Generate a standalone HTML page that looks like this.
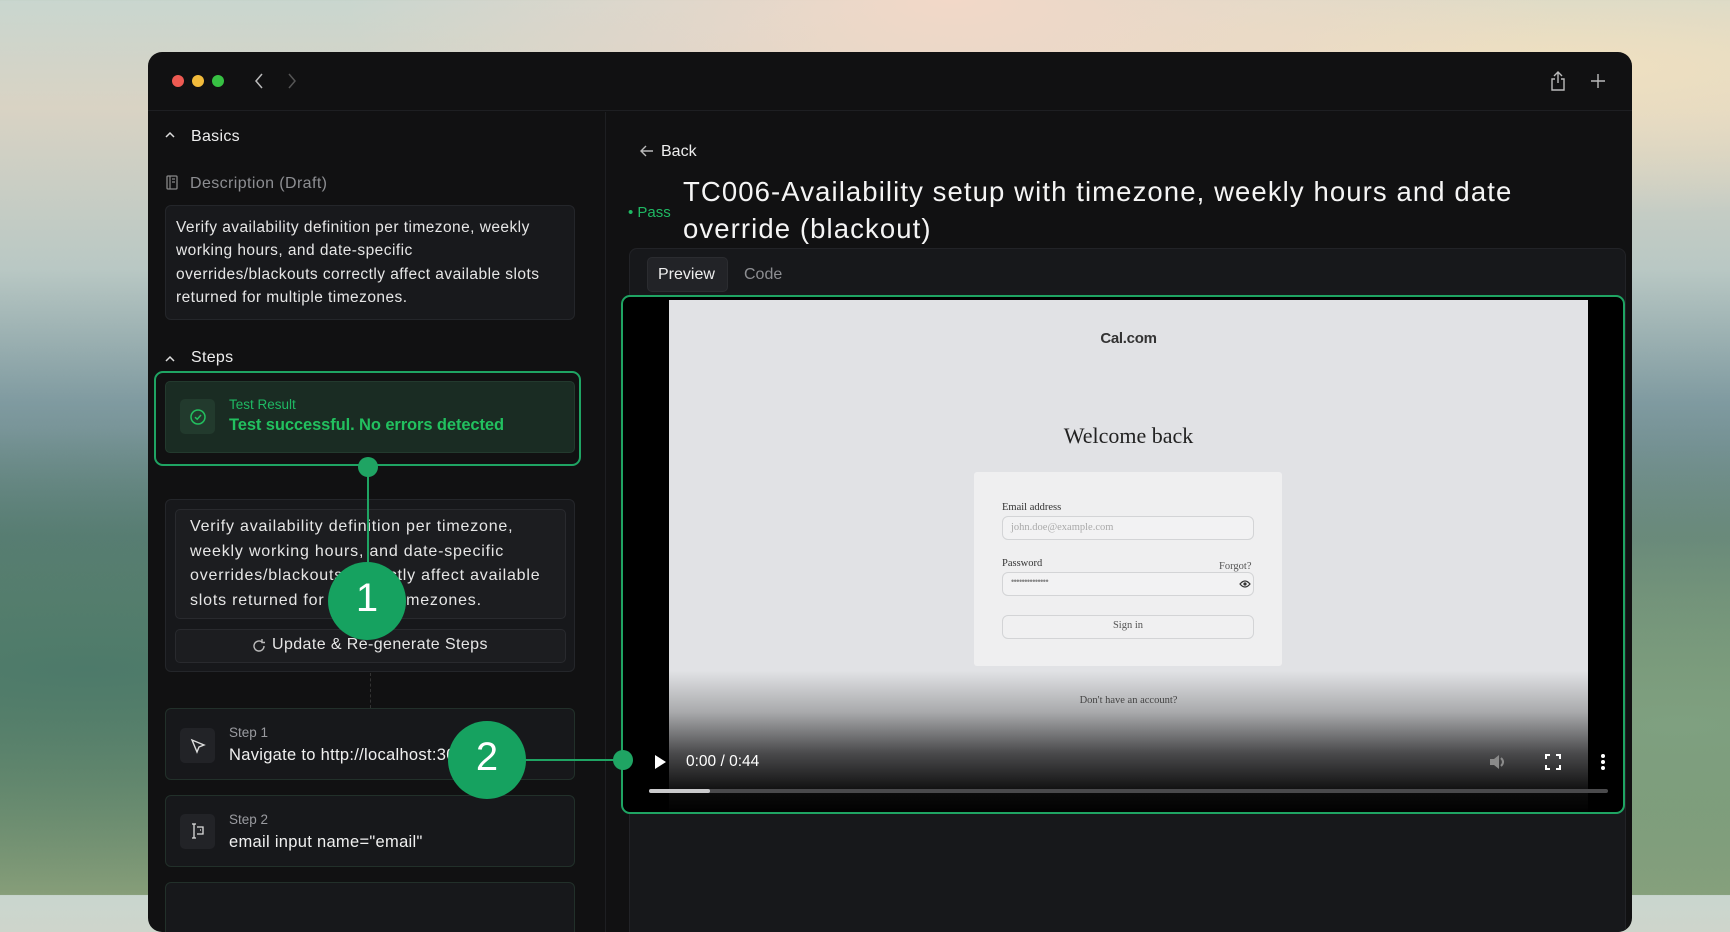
<!DOCTYPE html>
<html><head><meta charset="utf-8"><style>
*{box-sizing:border-box;margin:0;padding:0}
body{width:1730px;height:895px;overflow:hidden;position:relative;font-family:"Liberation Sans",sans-serif;
background:linear-gradient(180deg,#c9d6cf 0%,#d9d3c4 12%,#b9c8c4 30%,#7f9aa0 45%,#5f7f78 60%,#6f8e6c 80%,#8aa07a 100%);}
.abs{position:absolute}
.win{position:absolute;left:148px;top:52px;width:1484px;height:880px;background:#111112;border-radius:14px;overflow:hidden}
.t{position:absolute;white-space:nowrap}
.card{position:absolute;border:1px solid #24262a;border-radius:6px;background:#17181b}
.ic{position:absolute;width:35px;height:35px;border-radius:5px;background:#222327}
</style></head><body>
<div class="abs" style="left:0;top:0;width:1730px;height:330px;background:radial-gradient(ellipse at 55% 0%,#f2d8c8 0%,rgba(240,215,200,0) 45%),radial-gradient(ellipse at 90% 20%,#f0e0c0 0%,rgba(0,0,0,0) 40%)"></div>
<div class="abs" style="left:0;top:330px;width:1730px;height:565px;background:radial-gradient(ellipse at 5% 60%,#4d7a6a 0%,rgba(0,0,0,0) 50%),radial-gradient(ellipse at 97% 70%,#7fa080 0%,rgba(0,0,0,0) 50%)"></div>
<div class="win">
 <div class="abs" style="left:0;top:0;width:1484px;height:59px;border-bottom:1px solid #1e1f22"></div>
 <div class="abs" style="left:24px;top:23px;width:12px;height:12px;border-radius:50%;background:#ee5a52"></div>
 <div class="abs" style="left:44px;top:23px;width:12px;height:12px;border-radius:50%;background:#f2bb3b"></div>
 <div class="abs" style="left:64px;top:23px;width:12px;height:12px;border-radius:50%;background:#37c143"></div>
 <svg class="abs" style="left:104px;top:20px" width="14" height="18"><path d="M10 2 L4 9 L10 16" stroke="#bbb" stroke-width="1.5" fill="none"/></svg>
 <svg class="abs" style="left:137px;top:20px" width="14" height="18"><path d="M4 2 L10 9 L4 16" stroke="#555" stroke-width="1.5" fill="none"/></svg>
 <svg class="abs" style="left:1401px;top:18px" width="18" height="22"><path d="M9 2V13M5 6L9 2L13 6M6 9H3V20H15V9H12" stroke="#bbb" stroke-width="1.4" fill="none"/></svg>
 <svg class="abs" style="left:1441px;top:20px" width="18" height="18"><path d="M9 2V16M2 9H16" stroke="#bbb" stroke-width="1.4"/></svg>
 <div class="abs" style="left:457px;top:60px;width:1px;height:820px;background:#1e1f22"></div>
 <svg class="abs" style="left:16px;top:78px" width="12" height="10"><path d="M2 7L6 3L10 7" stroke="#ddd" stroke-width="1.5" fill="none"/></svg>
 <div class="t" style="left:43px;top:76px;font-size:16px;color:#eee;letter-spacing:.3px">Basics</div>
 <svg class="abs" style="left:18px;top:123px" width="12" height="16"><rect x="1" y="1" width="10" height="13" rx="1" stroke="#888" fill="none" stroke-width="1.3"/><path d="M4 1V14M6 4H9M6 7H9" stroke="#888" stroke-width="1.2"/></svg>
 <div class="t" style="left:42px;top:123px;font-size:16px;color:#8d8e92;letter-spacing:.4px">Description (Draft)</div>
 <div class="card" style="left:17px;top:153px;width:410px;height:115px;background:#18191c"></div>
 <div class="abs" style="left:28px;top:164px;width:400px;font-size:15.5px;line-height:23.3px;color:#e6e6e6;letter-spacing:.45px;white-space:nowrap">Verify availability definition per timezone, weekly<br>working hours, and date-specific<br>overrides/blackouts correctly affect available slots<br>returned for multiple timezones.</div>
 <svg class="abs" style="left:16px;top:302px" width="12" height="10"><path d="M2 7L6 3L10 7" stroke="#ddd" stroke-width="1.5" fill="none"/></svg>
 <div class="t" style="left:43px;top:297px;font-size:16px;color:#eee;letter-spacing:.3px">Steps</div>
 <div class="abs" style="left:6px;top:319px;width:427px;height:95px;border:2px solid #1fa463;border-radius:9px"></div>
 <div class="abs" style="left:17px;top:329px;width:410px;height:72px;background:#1a2c23;border:1px solid #233a2e;border-radius:5px"></div>
 <div class="ic" style="left:32px;top:347px;background:#223a2d"></div>
 <svg class="abs" style="left:41px;top:356px" width="18" height="18"><circle cx="9" cy="9" r="7" stroke="#22c05f" stroke-width="1.5" fill="none"/><path d="M6 9.2L8.2 11.2L12 7" stroke="#22c05f" stroke-width="1.5" fill="none"/></svg>
 <div class="t" style="left:81px;top:345px;font-size:13.5px;color:#1fb863">Test Result</div>
 <div class="t" style="left:81px;top:364px;font-size:16.5px;font-weight:bold;color:#22c05f;letter-spacing:-.1px">Test successful. No errors detected</div>
 <div class="card" style="left:17px;top:447px;width:410px;height:173px"></div>
 <div class="abs" style="left:27px;top:457px;width:391px;height:110px;background:#1c1d20;border:1px solid #292a2e;border-radius:5px"></div>
 <div class="abs" style="left:42px;top:463px;width:370px;font-size:16px;line-height:24.5px;color:#e6e6e6;letter-spacing:.8px">Verify availability definition per timezone, weekly working hours, and date-specific overrides/blackouts correctly affect available slots returned for multiple timezones.</div>
 <div class="abs" style="left:27px;top:577px;width:391px;height:34px;background:#1c1d20;border:1px solid #292a2e;border-radius:5px"></div>
 <svg class="abs" style="left:103px;top:586px" width="16" height="16"><path d="M13 8A5 5 0 1 1 11 4M11 1V4.5H14" stroke="#bbb" stroke-width="1.4" fill="none"/></svg>
 <div class="t" style="left:124px;top:584px;font-size:16px;color:#e6e6e6;letter-spacing:.4px">Update &amp; Re-generate Steps</div>
 <div class="abs" style="left:222px;top:621px;width:0;height:35px;border-left:1px dashed #333"></div>
 <div class="card" style="left:17px;top:656px;width:410px;height:72px;border-color:#22302a"></div>
 <div class="ic" style="left:32px;top:676px"></div>
 <svg class="abs" style="left:41px;top:685px" width="18" height="18"><path d="M3 3L8 15L10 10L15 8Z" stroke="#ddd" stroke-width="1.4" fill="none"/></svg>
 <div class="t" style="left:81px;top:673px;font-size:13.5px;color:#9a9ba0">Step 1</div>
 <div class="t" style="left:81px;top:694px;font-size:16.5px;color:#f0f0f0;letter-spacing:.3px">Navigate to http://localhost:3000</div>
 <div class="card" style="left:17px;top:743px;width:410px;height:72px;border-color:#22302a"></div>
 <div class="ic" style="left:32px;top:762px"></div>
 <svg class="abs" style="left:41px;top:770px" width="18" height="18"><path d="M5 2V16M3 2H7M3 16H7M8 5H14V12H8M11 8H12" stroke="#ddd" stroke-width="1.3" fill="none"/></svg>
 <div class="t" style="left:81px;top:760px;font-size:13.5px;color:#9a9ba0">Step 2</div>
 <div class="t" style="left:81px;top:781px;font-size:16.5px;color:#f0f0f0;letter-spacing:.3px">email input name="email"</div>
 <div class="card" style="left:17px;top:830px;width:410px;height:72px;border-color:#22302a"></div>
 <svg class="abs" style="left:491px;top:92px" width="16" height="14"><path d="M14 7H2M7 2L2 7L7 12" stroke="#bbb" stroke-width="1.4" fill="none"/></svg>
 <div class="t" style="left:513px;top:91px;font-size:16px;color:#eee">Back</div>
 <div class="t" style="left:480px;top:152px;font-size:15px;color:#1fb863">• Pass</div>
 <div class="abs" style="left:535px;top:121px;width:860px;font-size:27.5px;line-height:37px;color:#f5f5f5;letter-spacing:1.1px">TC006-Availability setup with timezone, weekly hours and date override (blackout)</div>
 <div class="abs" style="left:481px;top:196px;width:997px;height:700px;background:#17181b;border:1px solid #222327;border-radius:8px"></div>
 <div class="abs" style="left:499px;top:205px;width:81px;height:35px;background:#222327;border:1px solid #2b2c30;border-radius:5px"></div>
 <div class="t" style="left:510px;top:214px;font-size:16px;color:#eee">Preview</div>
 <div class="t" style="left:596px;top:214px;font-size:16px;color:#8d8e92">Code</div>
 <div class="abs" style="left:473px;top:243px;width:1004px;height:519px;border:2px solid #1fa463;border-radius:9px;background:#000;overflow:hidden">
  <div class="abs" style="left:46px;top:3px;width:919px;height:515px;background:linear-gradient(180deg,#e1e2e5 0%,#e1e2e5 72%,#a9aaac 80%,#4a4a4c 88%,#0a0a0a 96%,#000 100%)"></div>
  <div class="t" style="left:46px;top:33px;width:919px;text-align:center;font-size:15px;font-weight:bold;color:#333;letter-spacing:-.3px">Cal.com</div>
  <div class="t" style="left:46px;top:126px;width:919px;text-align:center;font-family:'Liberation Serif',serif;font-size:22px;color:#222">Welcome back</div>
  <div class="abs" style="left:351px;top:175px;width:308px;height:194px;background:#efeff0;border-radius:3px"></div>
  <div class="t" style="left:379px;top:205px;font-family:'Liberation Serif',serif;font-size:10.5px;color:#333">Email address</div>
  <div class="abs" style="left:379px;top:219px;width:252px;height:24px;border:1px solid #d3d4d6;border-radius:6px;background:#f2f2f3"></div>
  <div class="t" style="left:388px;top:225px;font-family:'Liberation Serif',serif;font-size:10.5px;color:#aaa">john.doe@example.com</div>
  <div class="t" style="left:379px;top:261px;font-family:'Liberation Serif',serif;font-size:10.5px;color:#333">Password</div>
  <div class="t" style="left:596px;top:264px;font-family:'Liberation Serif',serif;font-size:10.5px;color:#555">Forgot?</div>
  <div class="abs" style="left:379px;top:275px;width:252px;height:24px;border:1px solid #d3d4d6;border-radius:6px;background:#f2f2f3"></div>
  <div class="t" style="left:388px;top:279px;font-size:9px;color:#888;letter-spacing:-.5px">••••••••••••••</div>
  <svg class="abs" style="left:616px;top:282px" width="12" height="10"><path d="M1 5Q6 -1 11 5Q6 11 1 5Z" stroke="#333" fill="none" stroke-width="1.2"/><circle cx="6" cy="5" r="1.6" fill="#333"/></svg>
  <div class="abs" style="left:379px;top:318px;width:252px;height:24px;border:1px solid #d3d4d6;border-radius:6px;background:#f0f0f1"></div>
  <div class="t" style="left:379px;top:323px;width:252px;text-align:center;font-family:'Liberation Serif',serif;font-size:10.5px;color:#555">Sign in</div>
  <div class="t" style="left:46px;top:398px;width:919px;text-align:center;font-family:'Liberation Serif',serif;font-size:10.5px;color:#444">Don't have an account?</div>
  <svg class="abs" style="left:31px;top:458px" width="12" height="14"><path d="M1 0L12 7L1 14Z" fill="#fff"/></svg>
  <div class="t" style="left:63px;top:456px;font-size:15.5px;color:#fff">0:00 / 0:44</div>
  <svg class="abs" style="left:865px;top:456px" width="20" height="18"><path d="M2 6H6L11 2V16L6 12H2Z" fill="#8a8a8a"/><path d="M13 5Q17 9 13 13" stroke="#8a8a8a" stroke-width="2" fill="none"/></svg>
  <svg class="abs" style="left:922px;top:457px" width="16" height="16"><path d="M1 5V1H5M11 1H15V5M15 11V15H11M5 15H1V11" stroke="#fff" stroke-width="2" fill="none"/></svg>
  <div class="abs" style="left:978px;top:457px;width:4px;height:4px;border-radius:50%;background:#fff;box-shadow:0 6px 0 #fff,0 12px 0 #fff"></div>
  <div class="abs" style="left:26px;top:492px;width:959px;height:4px;border-radius:2px;background:#4a4a4c"></div>
  <div class="abs" style="left:26px;top:492px;width:61px;height:4px;border-radius:2px;background:#c9c9cb"></div>
 </div>
 <div class="abs" style="left:219px;top:415px;width:2px;height:135px;background:#1fa463"></div>
 <div class="abs" style="left:210px;top:405px;width:20px;height:20px;border-radius:50%;background:#1fa463"></div>
 <div class="abs" style="left:180px;top:510px;width:78px;height:78px;border-radius:50%;background:#16a260"></div>
 <div class="t" style="left:180px;top:524px;width:78px;text-align:center;font-size:40px;color:#fff">1</div>
 <div class="abs" style="left:370px;top:707px;width:110px;height:2px;background:#1fa463"></div>
 <div class="abs" style="left:465px;top:698px;width:20px;height:20px;border-radius:50%;background:#1fa463"></div>
 <div class="abs" style="left:300px;top:669px;width:78px;height:78px;border-radius:50%;background:#16a260"></div>
 <div class="t" style="left:300px;top:683px;width:78px;text-align:center;font-size:40px;color:#fff">2</div>
</div>
</body></html>
